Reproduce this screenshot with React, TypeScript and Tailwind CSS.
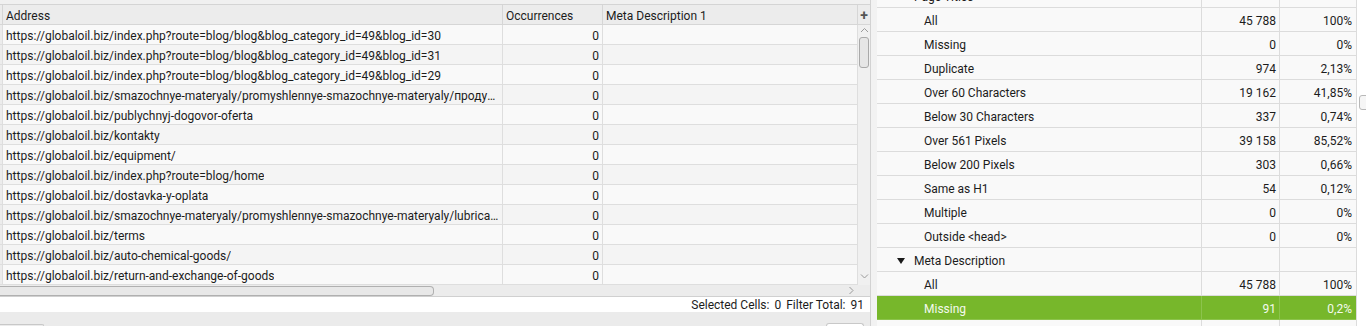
import React from "react";

const FONT = { fontFamily: "Roboto, 'Noto Sans', 'Liberation Sans', sans-serif" };

const urls = [
  "https://globaloil.biz/index.php?route=blog/blog&blog_category_id=49&blog_id=30",
  "https://globaloil.biz/index.php?route=blog/blog&blog_category_id=49&blog_id=31",
  "https://globaloil.biz/index.php?route=blog/blog&blog_category_id=49&blog_id=29",
  "https://globaloil.biz/smazochnye-materyaly/promyshlennye-smazochnye-materyaly/продукция-промышленная",
  "https://globaloil.biz/publychnyj-dogovor-oferta",
  "https://globaloil.biz/kontakty",
  "https://globaloil.biz/equipment/",
  "https://globaloil.biz/index.php?route=blog/home",
  "https://globaloil.biz/dostavka-y-oplata",
  "https://globaloil.biz/smazochnye-materyaly/promyshlennye-smazochnye-materyaly/lubricants-industrial",
  "https://globaloil.biz/terms",
  "https://globaloil.biz/auto-chemical-goods/",
  "https://globaloil.biz/return-and-exchange-of-goods",
];

type Row = { label: string; count?: string; pct?: string; group?: boolean; selected?: boolean };

const overview: Row[] = [
  { label: "Page Titles", group: true },
  { label: "All", count: "45 788", pct: "100%" },
  { label: "Missing", count: "0", pct: "0%" },
  { label: "Duplicate", count: "974", pct: "2,13%" },
  { label: "Over 60 Characters", count: "19 162", pct: "41,85%" },
  { label: "Below 30 Characters", count: "337", pct: "0,74%" },
  { label: "Over 561 Pixels", count: "39 158", pct: "85,52%" },
  { label: "Below 200 Pixels", count: "303", pct: "0,66%" },
  { label: "Same as H1", count: "54", pct: "0,12%" },
  { label: "Multiple", count: "0", pct: "0%" },
  { label: "Outside <head>", count: "0", pct: "0%" },
  { label: "Meta Description", group: true },
  { label: "All", count: "45 788", pct: "100%" },
  { label: "Missing", count: "91", pct: "0,2%", selected: true },
  { label: "Duplicate", count: "", pct: "" },
];

function Chevron({ dir }: { dir: "up" | "down" | "right" }) {
  const d = dir === "up" ? "M1 5 L4.5 1.5 L8 5" : dir === "down" ? "M1 1.5 L4.5 5 L8 1.5" : "M1.5 1 L5 4.5 L1.5 8";
  return (
    <svg width="9" height="9" viewBox="0 0 9 9" className="block">
      <path d={d} fill="none" stroke="#9a9a9a" strokeWidth="1" />
    </svg>
  );
}

function Triangle() {
  return (
    <svg width="8" height="6" viewBox="0 0 8 6" className="block">
      <polygon points="0,0 8,0 4,6" fill="#1a1a1a" />
    </svg>
  );
}

function UrlTable() {
  return (
    <div className="flex h-[326px] w-[871px] shrink-0 flex-col border-r border-[#d2d2d2] bg-[#ececec]">
      <div className="h-[5px] border-b border-[#d4d4d4] bg-[#f0f0f0]" />
      <div className="flex h-[20px] border-b border-[#d6d6d6] bg-[#ececec] text-[12px] text-[#1c1c1c]">
        <div className="w-[3px] border-r border-[#d6d6d6]" />
        <div className="flex w-[500px] items-center border-r border-[#d6d6d6] px-[3px] pt-[2px]">Address</div>
        <div className="flex w-[100px] items-center border-r border-[#d6d6d6] px-[3px] pt-[2px]">Occurrences</div>
        <div className="flex w-[255px] items-center border-r border-[#d6d6d6] px-[3px] pt-[2px]">Meta Description 1</div>
        <div className="flex flex-1 items-center justify-center text-[14px] font-bold leading-none text-[#555]">+</div>
      </div>
      <div className="flex h-[260px]">
        <div className="flex w-[858px] flex-col">
          {urls.map((u, i) => (
            <div
              key={i}
              className={`flex h-[20px] border-b border-[#dedede] text-[12px] text-[#1c1c1c] ${i % 2 === 0 ? "bg-[#f9f9f9]" : "bg-[#f4f4f4]"}`}
            >
              <div className="w-[3px] border-r border-[#dedede] bg-[#ececec]" />
              <div className="flex w-[500px] items-center overflow-hidden border-r border-[#dedede] px-[3px] pt-[2px]">
                <span className="truncate">{u}</span>
              </div>
              <div className="flex w-[100px] items-center justify-end border-r border-[#dedede] px-[3px] pt-[2px]">0</div>
              <div className="w-[255px] border-r border-[#dedede]" />
            </div>
          ))}
        </div>
        <div className="flex w-[12px] flex-col items-center bg-[#f0f0f0]">
          <div className="pt-[2px]">
            <Chevron dir="up" />
          </div>
          <div className="mt-[1px] h-[31px] w-[10px] rounded-[3px] border border-[#a9a9a9] bg-[#e6e6e6]" />
          <div className="flex-1" />
          <div className="pb-[3px]">
            <Chevron dir="down" />
          </div>
        </div>
      </div>
      <div className="flex h-[12px] border-b border-[#d0d0d0]">
        <div className="flex w-[858px] items-center bg-[#ececec]">
          <div className="h-[10px] w-[434px] rounded-r-[4px] border border-l-0 border-[#b0b0b0] bg-[#e8e8e8]" />
          <div className="flex-1" />
          <div className="pr-[1px]">
            <Chevron dir="right" />
          </div>
        </div>
        <div className="flex-1 bg-[#ececec]" />
      </div>
      <div className="flex h-[15px] items-center justify-end gap-[5px] bg-white pr-[6px] pt-[1px] text-[12px] leading-none text-[#1c1c1c]">
        <span>Selected Cells:</span>
        <span>0</span>
        <span>Filter Total:</span>
        <span>91</span>
      </div>
      <div className="flex h-[14px] items-end bg-[#ebebeb]">
        <div className="h-[2px] w-[44px] rounded-tr-[4px] border-r border-t border-[#c8c8c8]" />
        <div className="flex-1" />
        <div className="mr-[6px] h-[3px] w-[38px] rounded-t-[4px] border-l border-r border-t border-[#c8c8c8] bg-white" />
      </div>
    </div>
  );
}

function Overview() {
  return (
    <div className="flex h-[326px] flex-1 overflow-hidden bg-white">
      <div className="w-[480px] shrink-0 overflow-hidden border-r border-[#dcdcdc] bg-[#f9f9f9]">
        <div className="mt-[-16px] flex flex-col">
          {overview.map((r, i) => (
            <div
              key={i}
              className={`flex h-[24px] shrink-0 border-b text-[12px] ${
                r.selected ? "border-[#8cc34c] bg-[#77b72b] text-[#f4faee]" : "border-[#dcdcdc] text-[#1c1c1c]"
              }`}
            >
              <div
                className={`flex w-[325px] items-center gap-[9px] border-r pt-[3px] ${r.selected ? "border-[#8cc34c]" : "border-[#dcdcdc]"} ${
                  r.group ? "pl-[20px]" : "pl-[47px]"
                }`}
              >
                {r.group && <Triangle />}
                <span>{r.label}</span>
              </div>
              <div
                className={`flex w-[78px] items-center justify-end border-r pr-[3px] pt-[3px] ${r.selected ? "border-[#8cc34c]" : "border-[#dcdcdc]"}`}
              >
                {r.count}
              </div>
              <div className="flex flex-1 items-center justify-end pr-[4px] pt-[3px]">{r.pct}</div>
            </div>
          ))}
        </div>
      </div>
      <div className="flex-1 pl-[2px] pt-[95px]">
        <div className="h-[15px] w-[12px] rounded-[3px] border border-[#b8b8b8] bg-[#f6f6f6]" />
      </div>
    </div>
  );
}

export default function App() {
  return (
    <div className="flex h-[326px] w-[1366px] overflow-hidden bg-[#ececec]" style={FONT}>
      <UrlTable />
      <div className="w-[6px] shrink-0 bg-[#f2f2f2]" />
      <Overview />
    </div>
  );
}
